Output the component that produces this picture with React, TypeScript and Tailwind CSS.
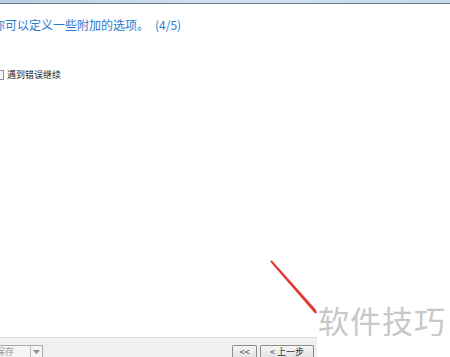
import React from "react";

export default function App() {
  return (
    <div className="relative w-[450px] h-[357px] bg-white overflow-hidden" style={{ fontFamily: '"Noto Sans CJK SC", "Liberation Sans", sans-serif' }}>
      <div className="flex flex-col h-full">
        <div className="h-[3px] bg-gradient-to-r from-[#b9cde3] via-[#d3e2f1] to-[#c5d8ec]" />
        <div className="h-px bg-[#6b7b8c]" />
        <div className="flex-1 flex flex-col">
          <div className="mt-[14px] ml-[-7px] text-[12px] leading-[14px] text-[#2a7ad0] whitespace-nowrap flex">
            <span>你可以定义一些附加的选项。</span>
            <span className="ml-[6px]">(4/5)</span>
          </div>
          <div className="mt-[37px] flex items-center gap-[3px] ml-[-6px]">
            <div className="w-[10px] h-[10px] border border-[#8f8f8f] bg-[#f4f4f4]" />
            <span className="text-[9px] leading-[12px] text-[#222]">遇到错误继续</span>
          </div>
        </div>
        <div className="flex h-[20px]">
          <div className="w-[317px] border-t border-[#dcdcdc] bg-[#f0f0f0] flex items-end justify-between">
            <div className="flex h-[12px] ml-[-8px] border border-[#a9a9a9] border-b-0 bg-[#f5f5f5]">
              <span className="w-[37px] text-[9px] leading-[12px] text-[#9a9a9a] pl-[3px]">保存</span>
              <div className="w-[12px] border-l border-[#bdbdbd] flex items-center justify-center">
                <svg width="7" height="4" viewBox="0 0 7 4"><path d="M0 0 L7 0 L3.5 4 Z" fill="#8a8a8a" /></svg>
              </div>
            </div>
            <div className="flex gap-[3px] mr-[3px]">
              <div className="h-[12px] w-[25px] border border-[#8c8c8c] border-b-0 rounded-t-[2px] bg-gradient-to-b from-[#f6f6f6] to-[#e5e5e5] text-[9px] leading-[12px] text-[#333] text-center">&lt;&lt;</div>
              <div className="h-[12px] w-[54px] border border-[#8c8c8c] border-b-0 rounded-t-[2px] bg-gradient-to-b from-[#f6f6f6] to-[#e5e5e5] text-[9px] leading-[12px] text-[#333] text-center">&lt; 上一步</div>
            </div>
          </div>
          <div className="flex-1 bg-white" />
        </div>
      </div>
      <svg className="absolute left-0 top-0" width="450" height="357">
        <path d="M271 261 L316 313 L314.5 309.5 Z" stroke="#e23b33" strokeWidth="2" strokeLinecap="round" fill="#e23b33" />
      </svg>
      <div className="absolute left-[318px] top-[301px] text-[31px] leading-[38px] text-[#c8c8c8] tracking-[1px] whitespace-nowrap">软件技巧</div>
    </div>
  );
}
